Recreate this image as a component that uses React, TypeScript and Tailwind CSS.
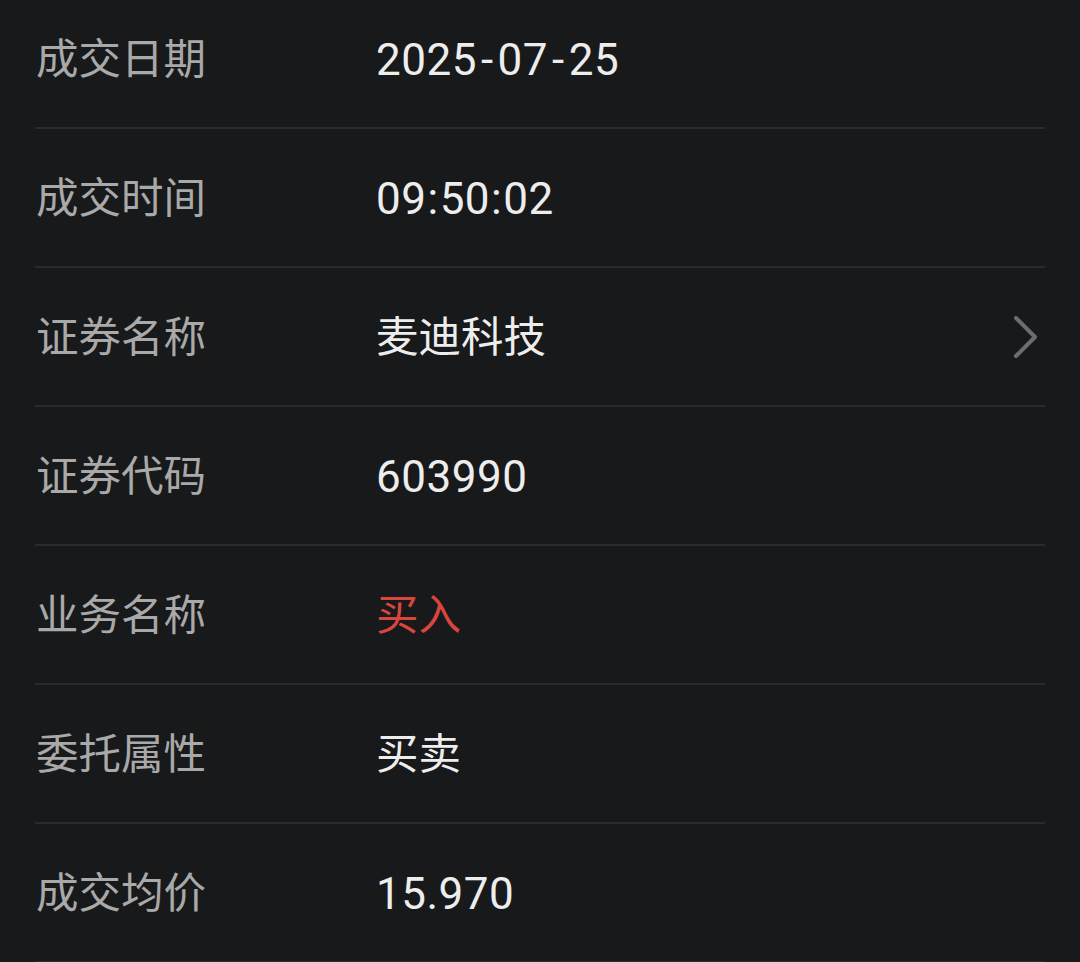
export default function App() {
  const rows: { label: string; value: string; red?: boolean; arrow?: boolean }[] = [
    { label: "成交日期", value: "2025-07-25" },
    { label: "成交时间", value: "09:50:02" },
    { label: "证券名称", value: "麦迪科技", arrow: true },
    { label: "证券代码", value: "603990" },
    { label: "业务名称", value: "买入", red: true },
    { label: "委托属性", value: "买卖" },
    { label: "成交均价", value: "15.970" },
  ];

  // digits are a touch wider in the source font, and dashes much wider
  const renderValue = (v: string) => {
    if (!/^[0-9:.\-]+$/.test(v)) return v;
    return (
      <span className="text-[44px] tracking-[0.5px]">
        {v.split("").map((ch, i) =>
          ch === "-" ? (
            <span key={i} className="mx-[4px]">
              -
            </span>
          ) : ch === ":" ? (
            <span key={i} className="mx-[1px]">
              :
            </span>
          ) : (
            ch
          )
        )}
      </span>
    );
  };

  return (
    <main
      className="w-[1080px] h-[962px] overflow-hidden bg-[#18191b]"
      style={{ fontFamily: 'Roboto, "Noto Sans CJK SC", sans-serif' }}
    >
      <div className="mt-[-10px] px-[35px]">
        {rows.map((row) => (
          <div
            key={row.label}
            className="h-[139px] flex items-center border-b-2 border-[#2a2b2d]"
          >
            <div className="w-[341px] pl-[1px] pt-[3px] text-[42.5px] text-[#a9a9a9] leading-none">
              {row.label}
            </div>
            <div
              className={
                "flex-1 pt-[3px] text-[42.5px] leading-none " +
                (row.red ? "text-[#d8463e]" : "text-[#ededed]")
              }
            >
              {renderValue(row.value)}
            </div>
            {row.arrow && (
              <svg
                width="30"
                height="44"
                viewBox="0 0 30 44"
                className="mr-[4px]"
                fill="none"
                stroke="#6c6d71"
                strokeWidth="4"
                strokeLinecap="round"
                strokeLinejoin="round"
              >
                <path d="M5 3 L24 22 L5 41" />
              </svg>
            )}
          </div>
        ))}
      </div>
    </main>
  );
}
